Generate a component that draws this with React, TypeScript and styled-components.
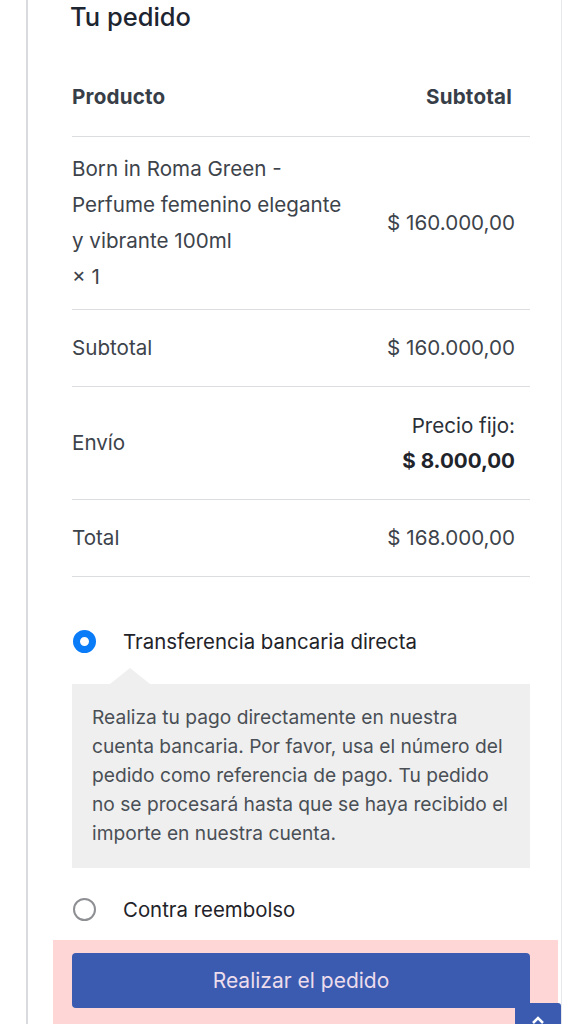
import React from "react";
import styled, { createGlobalStyle } from "styled-components";

const Global = createGlobalStyle`
  html, body { margin: 0; padding: 0; background: #ffffff; }
  body { font-family: Inter, "Noto Sans", "Liberation Sans", sans-serif; -webkit-font-smoothing: antialiased; }
  * { box-sizing: border-box; }
`;

const Page = styled.div`
  position: relative;
  width: 576px;
  height: 1024px;
  overflow: hidden;
`;

const Card = styled.div`
  margin-left: 26px;
  width: 536px;
  border-left: 2px solid #d9dadd;
  border-right: 1px solid #e6e7ea;
  padding: 0 31px 0 44px;
  min-height: 1024px;
`;

const Title = styled.h3`
  margin: 0 0 0 -2px;
  padding-top: 2px;
  height: 58px;
  font-size: 25.5px;
  line-height: 30px;
  font-weight: 500;
  color: #1d2530;
`;

const Row = styled.div<{ $pad: number; $right?: number }>`
  display: flex;
  justify-content: space-between;
  align-items: center;
  padding: ${(p) => p.$pad}px ${(p) => p.$right ?? 15}px ${(p) => p.$pad}px 0;
  border-bottom: 1px solid #dcdde0;
  font-size: 20.6px;
  color: #3d434b;
`;

const HeadCell = styled.span`
  font-weight: 700;
  line-height: 28px;
  color: #373e48;
  letter-spacing: 0.2px;
`;

const Cell = styled.span`
  line-height: 28px;
`;

const ProductName = styled.div`
  line-height: 36px;
  width: 284px;
`;

const RightStack = styled.div`
  text-align: right;
  line-height: 35px;
`;

const Bold = styled.div`
  font-weight: 700;
  color: #1f242b;
`;

const Plain = styled.div`
  color: #2b3038;
`;

const Payments = styled.div`
  padding-top: 50px;
`;

const MethodRow = styled.label`
  display: flex;
  align-items: center;
  gap: 27px;
  height: 28px;
  padding-left: 1px;
  font-size: 20.4px;
  color: #1f2329;
`;

const Radio = styled.span<{ $checked?: boolean }>`
  width: 23px;
  height: 23px;
  border-radius: 50%;
  flex: none;
  ${(p) =>
    p.$checked
      ? `border: 7.5px solid #0a7cf8; background: #fff;`
      : `border: 2px solid #8d8f93; background: #fff;`}
`;

const InfoBox = styled.div`
  position: relative;
  margin-top: 29px;
  background: #efefef;
  padding: 19px 14px 20px 20px;
  font-size: 19.2px;
  line-height: 29px;
  color: #4a4f56;

  &::before {
    content: "";
    position: absolute;
    top: -16px;
    left: 38px;
    border-left: 20px solid transparent;
    border-right: 20px solid transparent;
    border-bottom: 16px solid #efefef;
  }
`;

const SecondMethod = styled.div`
  margin-top: 27px;
`;

const PlaceOrder = styled.div`
  margin: 17px -28px 0 -19px;
  background: #ffd6d6;
  padding: 13px 28px 40px 19px;
`;

const Button = styled.button`
  display: block;
  width: 100%;
  height: 55px;
  border: none;
  border-radius: 4px;
  background: #3a5bb0;
  color: #ecdcec;
  font-family: inherit;
  font-size: 21px;
  font-weight: 400;
`;

const ScrollTop = styled.div`
  position: absolute;
  left: 515px;
  top: 1003px;
  width: 46px;
  height: 40px;
  background: #3a5bb0;
  border-radius: 3px 3px 0 0;
  display: flex;
  justify-content: center;
  padding-top: 13px;
`;

export default function App() {
  return (
    <Page>
      <Global />
      <Card>
        <Title>Tu pedido</Title>
        <Row $pad={25} $right={18}>
          <HeadCell>Producto</HeadCell>
          <HeadCell>Subtotal</HeadCell>
        </Row>
        <Row $pad={14}>
          <ProductName>
            Born in Roma Green - Perfume femenino elegante y vibrante 100ml
            <br />× 1
          </ProductName>
          <Cell>$ 160.000,00</Cell>
        </Row>
        <Row $pad={24}>
          <Cell>Subtotal</Cell>
          <Cell>$ 160.000,00</Cell>
        </Row>
        <Row $pad={21}>
          <Cell>Envío</Cell>
          <RightStack>
            <Plain>Precio fijo:</Plain>
            <Bold>$ 8.000,00</Bold>
          </RightStack>
        </Row>
        <Row $pad={24}>
          <Cell>Total</Cell>
          <Cell>$ 168.000,00</Cell>
        </Row>
        <Payments>
          <MethodRow>
            <Radio $checked />
            Transferencia bancaria directa
          </MethodRow>
          <InfoBox>
            Realiza tu pago directamente en nuestra cuenta bancaria. Por favor,
            usa el número del pedido como referencia de pago. Tu pedido no se
            procesará hasta que se haya recibido el importe en nuestra cuenta.
          </InfoBox>
          <SecondMethod>
            <MethodRow>
              <Radio />
              Contra reembolso
            </MethodRow>
          </SecondMethod>
        </Payments>
        <PlaceOrder>
          <Button>Realizar el pedido</Button>
        </PlaceOrder>
      </Card>
      <ScrollTop>
        <svg width="12" height="8" viewBox="0 0 12 8">
          <path d="M1 7 L6 2 L11 7" stroke="#fff" strokeWidth="2.5" fill="none" />
        </svg>
      </ScrollTop>
    </Page>
  );
}
